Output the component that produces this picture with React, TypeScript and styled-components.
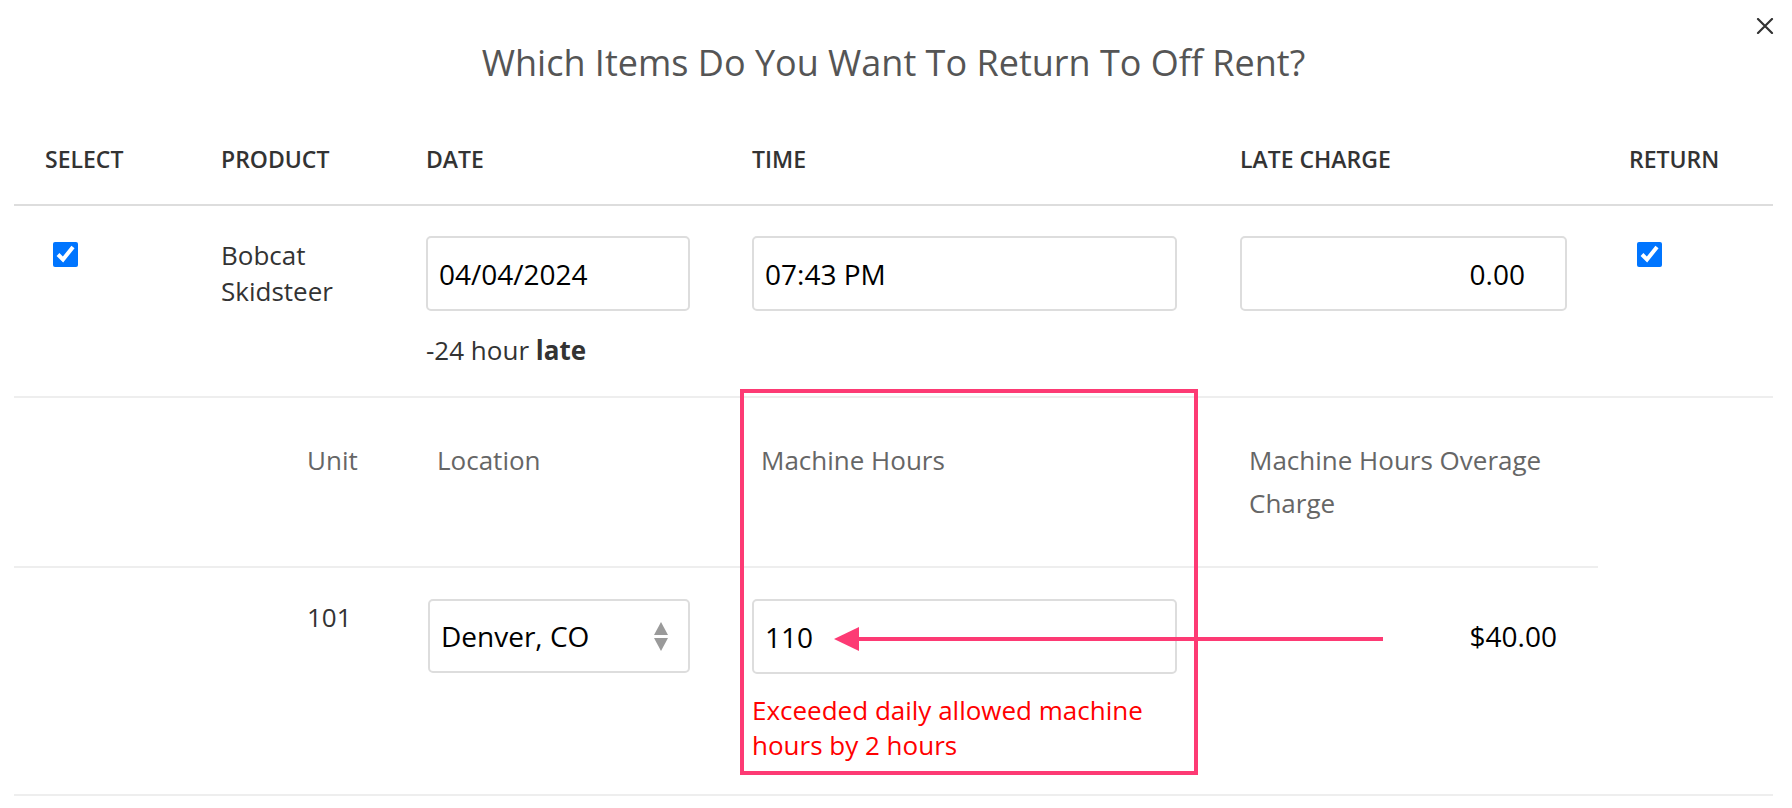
import * as React from 'react';
import styled, { createGlobalStyle } from 'styled-components';

const GlobalStyle = createGlobalStyle`
  html, body {
    margin: 0;
    padding: 0;
    background: #fff;
  }
  body {
    font-family: 'Open Sans', 'Liberation Sans', sans-serif;
    color: #333;
  }
`;

const Modal = styled.div`
  position: relative;
  width: 1759px;
  padding: 38px 19px 0 14px;
`;

const CloseButton = styled.button`
  position: absolute;
  top: 17px;
  right: 17px;
  width: 20px;
  height: 17px;
  padding: 0;
  border: 0;
  background: transparent;
  cursor: pointer;
  display: flex;
  align-items: center;
  justify-content: center;
`;

const Title = styled.h2`
  margin: 0;
  text-align: center;
  font-size: 36px;
  font-weight: 400;
  line-height: 1.362;
  color: #555;
`;

const MainGrid = styled.div`
  display: grid;
  grid-template-columns: 207px 205px 326px 488px 389px 144px;
`;

const HeadCell = styled.div<{ $pl?: number }>`
  padding: 55px 0 28px ${(p) => p.$pl ?? 0}px;
  font-size: 23px;
  line-height: 34px;
  font-weight: 600;
  color: #333;
  text-transform: uppercase;
  border-bottom: 2px solid #ddd;
`;

const Cell = styled.div<{ $pl?: number; $pt?: number }>`
  padding: ${(p) => p.$pt ?? 30}px 0 28px ${(p) => p.$pl ?? 0}px;
  font-size: 26px;
  line-height: 36px;
  color: #333;
  border-bottom: 2px solid #eee;
`;

const Check = styled.input.attrs({ type: 'checkbox' })`
  display: block;
  width: 25px;
  height: 25px;
  margin: 0;
  accent-color: #0075ff;
`;

const TextField = styled.input<{ $w: number; $right?: boolean }>`
  box-sizing: border-box;
  display: block;
  width: ${(p) => p.$w}px;
  height: 75px;
  padding: 0 ${(p) => (p.$right ? 40 : 11)}px 0 11px;
  border: 2px solid #ddd;
  border-radius: 5px;
  font-family: 'Open Sans', 'Liberation Sans', sans-serif;
  font-size: 28px;
  color: #000;
  background: #fff;
  text-align: ${(p) => (p.$right ? 'right' : 'left')};
  outline: none;
`;

const Note = styled.div`
  margin-top: 21px;
  font-size: 26px;
  line-height: 36px;
  color: #333;

  b {
    font-weight: 700;
  }
`;

const DetailRow = styled.div`
  grid-column: 1 / -1;
  border-bottom: 2px solid #eee;
`;

const SubGrid = styled.div`
  display: grid;
  width: 1584px;
  grid-template-columns: 284px 130px 324px 488px 358px;
`;

const SubHead = styled.div<{ $pl?: number }>`
  padding: 41px 0 41px ${(p) => p.$pl ?? 9}px;
  font-size: 26px;
  line-height: 43px;
  color: #666;
  border-bottom: 2px solid #eee;
`;

const SubCell = styled.div<{ $pl?: number; $pt?: number; $right?: boolean }>`
  padding: ${(p) => p.$pt ?? 31}px ${(p) => (p.$right ? 41 : 0)}px 31px ${(p) => p.$pl ?? 0}px;
  font-size: 26px;
  line-height: 36px;
  color: #333;
  text-align: ${(p) => (p.$right ? 'right' : 'left')};
`;

const Amount = styled.div`
  font-size: 28px;
  line-height: 75px;
  color: #000;
`;

const SelectWrap = styled.div`
  position: relative;
  width: 262px;
`;

const Select = styled.select`
  box-sizing: border-box;
  display: block;
  width: 262px;
  height: 74px;
  padding: 0 40px 0 11px;
  border: 2px solid #ddd;
  border-radius: 5px;
  font-family: 'Open Sans', 'Liberation Sans', sans-serif;
  font-size: 28px;
  color: #000;
  background: #fff;
  appearance: none;
  outline: none;
`;

const SelectArrows = styled.svg`
  position: absolute;
  top: 23px;
  right: 21px;
  pointer-events: none;
`;

const ErrorText = styled.div`
  width: 425px;
  margin-top: 19px;
  font-size: 26px;
  line-height: 35px;
  color: #ff0000;
`;

const Highlight = styled.div`
  position: absolute;
  left: 740px;
  top: 389px;
  width: 458px;
  height: 386px;
  box-sizing: border-box;
  border: 4px solid #fd3a74;
  pointer-events: none;
`;

const Pointer = styled.svg`
  position: absolute;
  left: 832px;
  top: 626px;
  pointer-events: none;
`;

export default function App() {
  return (
    <>
      <GlobalStyle />
      <Modal>
        <CloseButton aria-label="Close">
          <svg width="18" height="16" viewBox="0 0 18 16">
            <path d="M2 1 L16 15 M16 1 L2 15" stroke="#333" strokeWidth="2.2" strokeLinecap="round" />
          </svg>
        </CloseButton>

        <Title>Which Items Do You Want To Return To Off Rent?</Title>

        <MainGrid>
          <HeadCell $pl={31}>Select</HeadCell>
          <HeadCell>Product</HeadCell>
          <HeadCell>Date</HeadCell>
          <HeadCell>Time</HeadCell>
          <HeadCell>Late Charge</HeadCell>
          <HeadCell>Return</HeadCell>

          <Cell $pl={39} $pt={36}>
            <Check defaultChecked />
          </Cell>
          <Cell $pt={31}>
            Bobcat
            <br />
            Skidsteer
          </Cell>
          <Cell>
            <TextField $w={264} defaultValue="04/04/2024" />
            <Note>
              -24 hour <b>late</b>
            </Note>
          </Cell>
          <Cell>
            <TextField $w={425} defaultValue="07:43 PM" />
          </Cell>
          <Cell>
            <TextField $w={327} $right defaultValue="0.00" />
          </Cell>
          <Cell $pl={8} $pt={36}>
            <Check defaultChecked />
          </Cell>

          <DetailRow>
            <SubGrid>
              <SubHead />
              <SubHead>Unit</SubHead>
              <SubHead>Location</SubHead>
              <SubHead>Machine Hours</SubHead>
              <SubHead>
                Machine Hours Overage
                <br />
                Charge
              </SubHead>

              <SubCell />
              <SubCell $pl={9}>101</SubCell>
              <SubCell>
                <SelectWrap>
                  <Select defaultValue="denver">
                    <option value="denver">Denver, CO</option>
                  </Select>
                  <SelectArrows width="16" height="30" viewBox="0 0 16 30">
                    <path d="M8 0 L15 13 L1 13 Z" fill="#9a9a9a" />
                    <path d="M1 16 L15 16 L8 29 Z" fill="#9a9a9a" />
                  </SelectArrows>
                </SelectWrap>
              </SubCell>
              <SubCell>
                <TextField $w={425} defaultValue="110" />
                <ErrorText>Exceeded daily allowed machine hours by 2 hours</ErrorText>
              </SubCell>
              <SubCell $right>
                <Amount>$40.00</Amount>
              </SubCell>
            </SubGrid>
          </DetailRow>
        </MainGrid>

        <Highlight />
        <Pointer width="555" height="26" viewBox="0 0 555 26">
          <path d="M2 13 L27 1 L27 25 Z" fill="#fd3a74" />
          <rect x="24" y="11" width="527" height="4" fill="#fd3a74" />
        </Pointer>
      </Modal>
    </>
  );
}
